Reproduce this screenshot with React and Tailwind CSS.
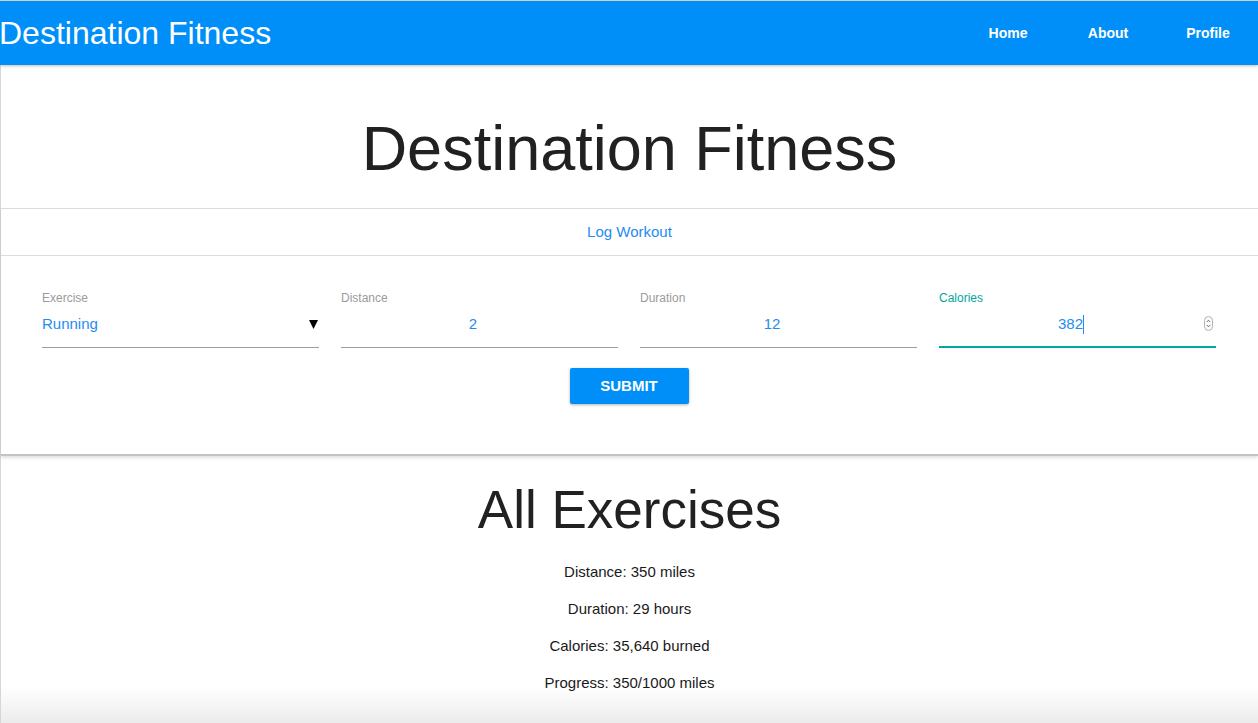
import React from 'react';

const font = { fontFamily: '"Liberation Sans", Arial, Helvetica, sans-serif' };

function Spinner() {
  return (
    <svg width="9" height="15" viewBox="0 0 9 15" className="shrink-0">
      <rect x="0.5" y="0.5" width="8" height="14" rx="4" fill="#fafafa" stroke="#b5b5b5" />
      <path d="M2.8 6 L4.5 4.2 L6.2 6" fill="none" stroke="#666" strokeWidth="0.9" />
      <path d="M2.8 9 L4.5 10.8 L6.2 9" fill="none" stroke="#666" strokeWidth="0.9" />
    </svg>
  );
}

function Field({ label, value, focused, number, select }) {
  return (
    <div className="flex flex-col">
      <span className={`text-[12px] leading-[14px] ${focused ? 'text-[#00a99d]' : 'text-[#9b9b9b]'}`}>{label}</span>
      <div
        className={`relative flex items-center h-[43px] pb-[3px] ${
          focused ? 'border-b-2 border-[#00a99d]' : 'border-b border-[#9e9e9e]'
        }`}
      >
        {select ? (
          <>
            <span className="flex-1 text-[15px] text-[#1e8cf2]">{value}</span>
            <svg width="9" height="9" viewBox="0 0 9 9" className="mr-[1px]">
              <polygon points="0,0 9,0 4.5,9" fill="#000" />
            </svg>
          </>
        ) : (
          <>
            <span className="flex-1 flex items-center justify-center text-[15px] text-[#1e8cf2] pr-[13px]">
              {value}
              {focused && <span className="inline-block w-px h-[19px] bg-[#1e8cf2]" />}
            </span>
            {focused && number && <span className="absolute right-[3px] top-[11px]"><Spinner /></span>}
          </>
        )}
      </div>
    </div>
  );
}

export default function App() {
  const stats = [
    'Distance: 350 miles',
    'Duration: 29 hours',
    'Calories: 35,640 burned',
    'Progress: 350/1000 miles',
  ];

  return (
    <div className="w-[1258px] h-[723px] overflow-hidden bg-white text-[#212121]" style={font}>
      {/* Navbar */}
      <nav className="relative z-10 h-[65px] border-t border-[#cfcfcf] bg-[#008ff8] flex items-center justify-between shadow-[0_1px_3px_rgba(0,0,0,0.25)]">
        <span className="text-white text-[32px] leading-none -ml-[1px]">Destination Fitness</span>
        <div className="flex items-center">
          {['Home', 'About', 'Profile'].map(l => (
            <span key={l} className="w-[100px] text-center text-white text-[14px] font-bold">{l}</span>
          ))}
        </div>
      </nav>

      <div className="border-l border-[#d6d6d6]">
        {/* Title */}
        <div className="pt-[52px] pb-[28px] flex justify-center">
          <h1 className="text-[63px] leading-[63px]">Destination Fitness</h1>
        </div>

        {/* Log workout card */}
        <div className="relative border-t border-b-2 border-[#dcdcdc] border-b-[#c4c4c4] shadow-[0_2px_3px_rgba(0,0,0,0.12)]">
          <div className="h-[47px] flex items-center justify-center border-b border-[#dcdcdc]">
            <span className="text-[15px] text-[#1e8cf2]">Log Workout</span>
          </div>
          <div className="pl-[41px] pr-[42px] pt-[35px] pb-[50px]">
            <div className="grid grid-cols-4 gap-x-[22px]">
              <Field label="Exercise" value="Running" select />
              <Field label="Distance" value="2" number />
              <Field label="Duration" value="12" number />
              <Field label="Calories" value="382" number focused />
            </div>
            <div className="flex justify-center mt-[20px]">
              <button className="w-[119px] h-[36px] rounded-[2px] bg-[#008ff8] text-white text-[15px] font-bold shadow-[0_1px_3px_rgba(0,0,0,0.3)]">
                SUBMIT
              </button>
            </div>
          </div>
        </div>

        {/* All exercises */}
        <div className="h-[268px] flex flex-col items-center bg-[linear-gradient(to_bottom,#ffffff_86%,#ebebeb)]">
          <h2 className="mt-[27px] text-[53px] leading-[53px]">All Exercises</h2>
          <div className="mt-[17px] flex flex-col items-center">
            {stats.map(s => (
              <p key={s} className="h-[37px] leading-[37px] text-[15px] text-[#1a1a1a]">{s}</p>
            ))}
          </div>
        </div>
      </div>
    </div>
  );
}
